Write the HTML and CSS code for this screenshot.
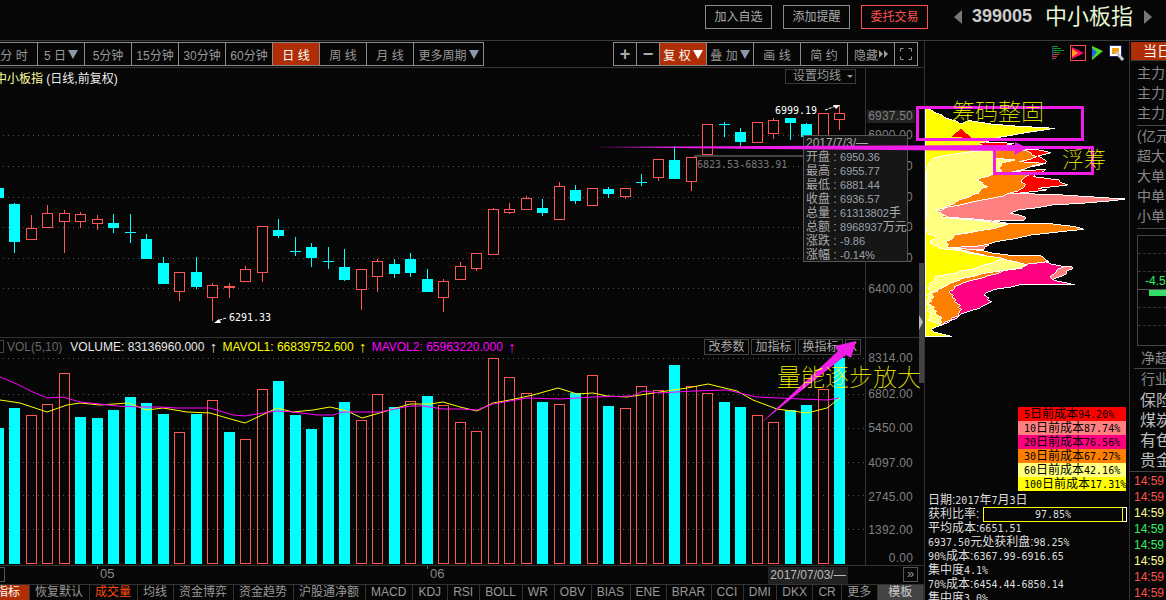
FILE: index.html
```html
<!DOCTYPE html>
<html>
<head>
    <meta charset="UTF-8">
    <title>中小板指</title>
    <link rel="stylesheet" href="styles.css">
</head>
<body>

<!-- top bar -->
<div class="top">
    <span class="top_btn">加入自选</span>
    <span class="top_btn">添加提醒</span>
    <span class="top_btn top_red">委托交易</span>
    <i class="tri_left"></i>
    <span class="code">399005</span>
    <span class="name">中小板指</span>
    <i class="tri_right"></i>
</div>

<div class="main">
    <!-- left: kline -->
    <div class="left">
        <div class="toolbar">
            <div class="tb_group first">
                <span class="cell">分 时</span>
                <span class="cell">5 日<i class="down"></i></span>
                <span class="cell">5分钟</span>
                <span class="cell">15分钟</span>
                <span class="cell">30分钟</span>
                <span class="cell">60分钟</span>
                <span class="cell on">日 线</span>
                <span class="cell">周 线</span>
                <span class="cell">月 线</span>
                <span class="cell wide">更多周期<i class="down"></i></span>
            </div>
            <div class="tb_group">
                <span class="cell small big_text">+</span>
                <span class="cell small big_text">−</span>
                <span class="cell on">复 权<i class="down white"></i></span>
                <span class="cell">叠 加<i class="down"></i></span>
                <span class="cell">画 线</span>
                <span class="cell">简 约</span>
                <span class="cell">隐藏<i class="more"></i><i class="more"></i></span>
                <span class="cell small">
                    <svg width="14" height="14" viewBox="0 0 14 14" fill="none" stroke="#999">
                        <path d="M1.500 4.500V1.500H4.500M9.500 1.500H12.500V4.500M12.500 9.500V12.500H9.500M4.500 12.500H1.500V9.500"/>
                    </svg>
                </span>
            </div>
        </div>

        <div class="chart">
            <svg id="kline" width="924" height="497" viewBox="0 68 924 497"></svg>

            <div class="title"><span class="title_name">中小板指</span> (日线,前复权)</div>
            <div class="set_ma">设置均线<i class="down_small"></i></div>

            <div class="vol_head">
                <span class="vol_box"></span>
                <span class="vol_name">VOL(5,10)</span>
                <span class="vol_w">VOLUME: 83136960.000</span><span class="arrow vol_w">↑</span>
                <span class="vol_y">MAVOL1: 66839752.600</span><span class="arrow vol_y">↑</span>
                <span class="vol_m">MAVOL2: 65963220.000</span><span class="arrow vol_m">↑</span>
            </div>
            <div class="vol_btns">
                <span>改参数</span>
                <span>加指标</span>
                <span>换指标</span>
                <span class="vol_x">X</span>
            </div>

            <div class="tip">
                <div class="tip_date">2017/7/3/—</div>
                <div>开盘 : <b>6950.36</b></div>
                <div>最高 : <b>6955.77</b></div>
                <div>最低 : <b>6881.44</b></div>
                <div>收盘 : <b>6936.57</b></div>
                <div>总量 : <b>61313802</b>手</div>
                <div>总额 : <b>8968937</b>万元</div>
                <div>涨跌 : <b>-9.86</b></div>
                <div>涨幅 : <b>-0.14%</b></div>
            </div>
        </div>

        <div class="timebar">
            <span class="t_box"></span>
            <span class="t_tick t_05">05</span>
            <span class="t_tick t_06">06</span>
            <span class="t_date">2017/07/03/—</span>
            <span class="t_next">»</span>
        </div>

        <div class="tabs">
            <span class="tab tab_on">指标</span>
            <span class="tab">恢复默认</span>
            <span class="tab tab_orange">成交量</span>
            <span class="tab">均线</span>
            <span class="tab">资金博弈</span>
            <span class="tab">资金趋势</span>
            <span class="tab">沪股通净额</span>
            <span class="tab">MACD</span>
            <span class="tab">KDJ</span>
            <span class="tab">RSI</span>
            <span class="tab">BOLL</span>
            <span class="tab">WR</span>
            <span class="tab lat">OBV</span>
            <span class="tab lat">BIAS</span>
            <span class="tab lat">ENE</span>
            <span class="tab lat">BRAR</span>
            <span class="tab lat">CCI</span>
            <span class="tab lat">DMI</span>
            <span class="tab lat">DKX</span>
            <span class="tab lat">CR</span>
            <span class="tab">更多</span>
            <span class="tab tab_tpl">模板</span>
        </div>
    </div>

    <!-- middle: chips -->
    <div class="chip">
        <div class="chip_icons">
            <svg width="12" height="16" viewBox="0 0 12 16" shape-rendering="crispEdges">
                <rect x="0" y="1" width="1" height="14" fill="#2040c0"/>
                <rect x="1" y="1" width="5" height="1" fill="#109020"/>
                <rect x="1" y="3" width="8" height="1" fill="#109020"/>
                <rect x="1" y="5" width="11" height="1" fill="#109020"/>
                <rect x="1" y="7" width="7" height="1" fill="#109020"/>
                <rect x="1" y="9" width="6" height="1" fill="#e04010"/>
                <rect x="1" y="11" width="4" height="1" fill="#e04010"/>
                <rect x="1" y="13" width="3" height="1" fill="#e04010"/>
            </svg>
            <svg width="16" height="16" viewBox="0 0 16 16">
                <rect x="0.500" y="0.500" width="15" height="15" fill="none" stroke="#ff4d4d"/>
                <polygon points="2,2 14,8 2,14" fill="#ff0a6a"/>
                <polygon points="2,4 8,8 2,12" fill="#ffa010"/>
            </svg>
            <svg width="11" height="16" viewBox="0 0 11 16">
                <polygon points="0,1 11,6 0,15" fill="#50e020"/>
                <polygon points="0,3 5,7 0,13" fill="#2060f0"/>
            </svg>
            <svg width="15" height="16" viewBox="0 0 15 16">
                <rect x="0.500" y="0.500" width="12" height="11" fill="#fff" stroke="#1a2a70"/>
                <rect x="3" y="3" width="7" height="6" fill="#f0a010"/>
                <path d="M7 7L14 15" stroke="#ccc" stroke-width="3"/>
            </svg>
        </div>
        <svg id="chips" width="204" height="280" viewBox="925 61 204 280"></svg>

        <div class="legend">
            <div class="c5"><span class="n">5</span>日前成本<span class="n">94.20%</span></div>
            <div class="c10"><span class="n">10</span>日前成本<span class="n">87.74%</span></div>
            <div class="c20"><span class="n">20</span>日前成本<span class="n">76.56%</span></div>
            <div class="c30"><span class="n">30</span>日前成本<span class="n">67.27%</span></div>
            <div class="c60"><span class="n">60</span>日前成本<span class="n">42.16%</span></div>
            <div class="c100"><span class="n">100</span>日前成本<span class="n">17.31%</span></div>
        </div>

        <div class="info">
            <div>日期:<span class="n">2017</span>年<span class="n">7</span>月<span class="n">3</span>日</div>
            <div class="ratio">
                <span class="ratio_label">获利比率:</span>
                <span class="ratio_box"><span class="ratio_bar n">97.85%</span><span class="ratio_rest"></span></span>
            </div>
            <div>平均成本:<span class="n">6651.51</span></div>
            <div><span class="n">6937.50</span>元处获利盘:<span class="n">98.25%</span></div>
            <div><span class="n">90%</span>成本:<span class="n">6367.99-6916.65</span></div>
            <div>集中度<span class="n">4.1%</span></div>
            <div><span class="n">70%</span>成本:<span class="n">6454.44-6850.14</span></div>
            <div>集中度<span class="n">3.0%</span></div>
        </div>
    </div>

    <!-- right: money flow -->
    <div class="side">
        <div class="side_head">当日资金</div>
        <div class="side_group first_group">
            <div class="row">主力流入</div>
            <div class="row">主力流出</div>
            <div class="row">主力净额</div>
        </div>
        <div class="side_group">
            <div class="row">(亿元)</div>
            <div class="row">超大单</div>
            <div class="row">大单</div>
            <div class="row">中单</div>
            <div class="row">小单</div>
        </div>
        <div class="mini">
            <div></div>
            <div></div>
            <div class="mini_mid"><span>-4.5</span></div>
            <div><span class="mini_bar"></span></div>
            <div></div>
            <div></div>
        </div>
        <div class="row net">净超大单</div>
        <div class="row trade">行业</div>
        <div class="row stock">保险</div>
        <div class="row stock">煤炭</div>
        <div class="row stock">有色</div>
        <div class="row stock">贵金属</div>
        <div class="times">
            <div class="up">14:59</div>
            <div class="up">14:59</div>
            <div class="flat">14:59</div>
            <div class="dn">14:59</div>
            <div class="dn">14:59</div>
            <div class="flat">14:59</div>
            <div class="up">14:59</div>
            <div class="up">14:59</div>
        </div>
    </div>
</div>

<!-- hand drawn marks on top of the screenshot -->
<svg class="marks" width="1166" height="600" viewBox="0 0 1166 600">
    <polygon fill="#ee1ee6" points="593,147 760,146 1015,145 1015,142 1028,148 1014,155 1015,151 760,149"/>
    <polygon fill="#ee1ee6" points="761,423 838,351 835,346 856,341 851,358 846,355"/>
    <rect class="mark_box" x="917.500" y="107.500" width="165" height="32"/>
    <rect class="mark_box" x="994.500" y="147.500" width="98" height="26"/>
    <text x="952" y="120" font-size="23">筹码整固</text>
    <text x="1062" y="167" font-size="22">浮筹</text>
    <text x="777" y="386" font-size="24">量能逐步放大</text>
</svg>

<script src="chart.js"></script>
</body>
</html>
```

FILE: styles.css
```css
*{ box-sizing: border-box; }
html,body{ margin: 0; height: 600px; overflow: hidden; }
body{
    position: relative;
    background: #060606;
    color: #999;
    font-family: "Liberation Sans", "Noto Sans CJK SC", sans-serif;
    font-size: 12px;
}
i{ font-style: normal; }

/* top */
.top{
    display: flex;
    align-items: center;
    justify-content: flex-end;
    height: 41px;
    padding: 0 14px 7px 0;
    border-bottom: 1px solid #3a3a3a;
}
.top_btn{
    width: 67px;
    height: 24px;
    margin-right: 11px;
    line-height: 22px;
    text-align: center;
    border: 1px solid #8a8a8a;
    font-size: 12px;
    color: #aaa;
}
.top_red{ margin-right: 26px; color: #ff5050; border-color: #ff5050; }
.tri_left,.tri_right{ width: 0; height: 0; border-top: 7px solid transparent; border-bottom: 7px solid transparent; }
.tri_left{ border-right: 8px solid #777; margin-right: 10px; }
.tri_right{ border-left: 8px solid #777; }
.code{ font-size: 18px; font-weight: bold; color: #ccc; margin-right: 13px; }
.name{ font-size: 22px; line-height: 24px; color: #e2f5d0; margin-right: 11px; }

.main{ display: flex; height: 559px; }

/* left */
.left{ width: 925px; border-right: 1px solid #333; overflow: hidden; }
.toolbar{
    display: flex;
    justify-content: space-between;
    height: 27px;
    padding: 1px 6px 0 0;
    border-bottom: 1px solid #333;
}
.tb_group{ display: flex; height: 24px; border: 1px solid #8a8a8a; border-left: 0; }
.tb_group.first{ margin-left: -10px; }
.cell{
    display: flex;
    align-items: center;
    justify-content: center;
    width: 47px;
    border-left: 1px solid #8a8a8a;
    white-space: pre;
}
.cell.wide{ width: 70px; }
.cell.small{ width: 23px; }
.cell.big_text{ font-size: 18px; font-weight: bold; color: #aaa; }
.cell.on{ background: #b02e05; color: #fff; }
.down{
    width: 0;
    height: 0;
    margin-left: 2px;
    border-left: 5px solid transparent;
    border-right: 5px solid transparent;
    border-top: 9px solid #8a97a8;
}
.down.white{ border-top-color: #fff; }
.more{
    width: 0;
    height: 0;
    margin-left: 1px;
    border-top: 4px solid transparent;
    border-bottom: 4px solid transparent;
    border-left: 4px solid #999;
}

.chart{ position: relative; height: 497px; }
.chart svg{ display: block; }
.chart svg text.axis{ font-size: 12px; fill: #808080; text-anchor: end; letter-spacing: 0.2px; }
.chart svg text.mark{ font-family: "DejaVu Sans Mono", monospace; font-size: 10px; fill: #fff; }
.chart svg text.gray{ fill: #777; }
.title{ position: absolute; left: -5px; top: 1px; color: #eee; white-space: pre; }
.title_name{ color: #ffffa0; }
.set_ma{
    position: absolute;
    left: 785px;
    top: 1px;
    width: 71px;
    height: 15px;
    line-height: 13px;
    padding-left: 7px;
    border: 1px solid #3a3a3a;
    color: #999;
}
.down_small{
    display: inline-block;
    margin-left: 6px;
    vertical-align: 2px;
    border-left: 3px solid transparent;
    border-right: 3px solid transparent;
    border-top: 3px solid #999;
}

.vol_head{
    position: absolute;
    left: 0;
    top: 271px;
    display: flex;
    align-items: center;
    height: 15px;
    white-space: pre;
}
.vol_box{ width: 4px; height: 13px; margin-right: 3px; border: 1px solid #444; border-left: 0; }
.vol_name{ color: #666; margin-right: 8px; }
.vol_w{ color: #e8e8e8; }
.vol_y{ color: #ffff00; }
.vol_m{ color: #ff00ff; }
.arrow{ width: 12px; margin: 0 3px; text-align: center; font-size: 15px; line-height: 15px; }
.vol_btns{ position: absolute; left: 704px; top: 271px; display: flex; gap: 2px; }
.vol_btns span{
    width: 45px;
    height: 16px;
    line-height: 14px;
    text-align: center;
    border: 1px solid #444;
    color: #aaa;
}
.vol_btns .vol_x{ width: 16px; }

.tip{
    position: absolute;
    left: 803px;
    top: 67px;
    width: 105px;
    height: 127px;
    padding-left: 2px;
    background: #161616;
    border: 1px solid #555;
    line-height: 14px;
    color: #aaa;
}
.tip b{ font-weight: normal; font-size: 11px; color: #9aa3ad; }

.timebar{ position: relative; height: 19px; border-top: 1px solid #333; color: #888; font-size: 13px; }
.t_box{ position: absolute; left: -10px; top: 1px; width: 15px; height: 15px; border: 1px solid #555; }
.t_tick{ position: absolute; top: 0; line-height: 16px; }
.t_tick::before{ content: ""; position: absolute; left: -3px; top: 0; width: 1px; height: 3px; background: #666; }
.t_05{ left: 100px; }
.t_06{ left: 430px; }
.t_date{
    position: absolute;
    left: 768px;
    top: 1px;
    width: 80px;
    height: 17px;
    line-height: 17px;
    text-align: center;
    background: #222;
    color: #bbb;
    font-size: 12px;
}
.t_next{
    position: absolute;
    left: 903px;
    top: 1px;
    width: 15px;
    height: 15px;
    line-height: 12px;
    text-align: center;
    border: 1px solid #555;
    color: #999;
}

.tabs{ display: flex; height: 16px; border-top: 1px solid #333; line-height: 15px; white-space: nowrap; }
.tab{ padding: 0 6px 0 5px; border-right: 1px solid #333; color: #999; }
.tab.lat{ padding-right: 5.500px; }
.tab_on{ margin-left: -4px; padding: 0 9px 0 0; background: #b02e05; color: #fff; }
.tab_orange{ color: #ff4a10; }
.tab_tpl{ flex: 1; padding-left: 10px; background: #444; color: #ccc; }

/* chips */
.chip{ width: 204px; overflow: hidden; }
.chip svg{ display: block; }
.chip_icons{ display: flex; justify-content: flex-end; gap: 6px; height: 16px; margin-top: 4px; padding-right: 5px; }
.legend{ width: 108px; margin: 66px 0 0 93px; line-height: 14px; color: #000; }
.legend div{ height: 14px; padding-left: 6px; white-space: nowrap; }
.c5{ background: #ff0000; }
.c10{ background: #ff8080; }
.c20{ background: #ff0080; }
.c30{ background: #ff8000; }
.c60{ background: #ffff80; }
.c100{ background: #ffff00; }
.n{ font-family: "DejaVu Sans Mono", monospace; font-size: 10px; }
.info{ margin-top: 2px; padding-left: 3px; line-height: 14px; color: #ddd; white-space: nowrap; }
.info div{ height: 14px; }
.ratio{ display: flex; }
.ratio_label{ width: 55px; }
.ratio_box{ display: flex; width: 144px; height: 15px; }
.ratio_bar{ flex: 1; line-height: 13px; text-align: center; border: 1px solid #ffff00; }
.ratio_rest{ width: 4px; border: 1px solid #fff; border-left: 0; }

/* side */
.side{ flex: 1; border-left: 1px solid #333; overflow: hidden; font-size: 14px; color: #888; white-space: nowrap; }
.side_head{ height: 18px; margin: 1px 0 0 1px; padding-left: 12px; line-height: 18px; background: #b02e05; color: #fff; }
.row{ height: 20px; line-height: 20px; padding-left: 7px; }
.side_group{ margin-left: 7px; padding-bottom: 2px; border-bottom: 1px solid #444; }
.side_group .row{ padding-left: 0; }
.first_group{ margin: 0; padding: 2px 0 0 7px; border-top: 1px solid #333; border-bottom: 0; }
.first_group::after{ content: ""; display: block; height: 1px; margin-top: 2px; background: #444; }
.mini{ margin: 6px 0 0 7px; height: 111px; border: 1px solid #444; border-right: 0; }
.mini div{ height: 18px; border-bottom: 1px dashed #333; }
.mini div:last-child{ border-bottom: 0; }
.mini .mini_mid{ border-bottom: 1px solid #555; padding-left: 7px; font-size: 12px; line-height: 18px; color: #33ee66; }
.mini_bar{ display: block; width: 30px; height: 6px; margin-left: 11px; background: #33dd66; }
.net{ margin-top: 2px; padding-left: 11px; }
.trade{ border-top: 1px solid #444; margin-left: 4px; height: 23px; line-height: 21px; }
.stock{ padding-left: 10px; font-size: 16px; color: #bbb; }
.times{ padding: 1px 0 0 4px; border-top: 1px solid #444; font-size: 12px; line-height: 16px; }
.up{ color: #ff5050; }
.flat{ color: #ffff90; }
.dn{ color: #33ee66; }

/* marks */
.marks{ position: absolute; left: 0; top: 0; pointer-events: none; }
.marks text{ fill: #ffff00; font-weight: 100; }
.mark_box{ fill: none; stroke: #ee1ee6; stroke-width: 3; }
```

FILE: chart.js
```js
// 日K数据: [颜色, 实体顶, 实体底, 上影, 下影]  都是屏幕y坐标
var candles = [
    ["c",204,242,203,253],["r",228,239,215,239],["r",213,227,205,227],["r",213,221,210,253],
    ["r",214,221,212,228],["r",219,223,215,230],["c",223,228,214,233],["c",232,233,214,243],
    ["c",239,259,234,259],["c",263,284,257,284],["r",272,291,272,301],["c",272,287,257,289],
    ["r",285,297,283,321],["r",286,288,283,298],["r",269,281,266,281],["r",226,272,226,282],
    ["c",230,236,219,238],["c",251,252,237,256],["c",247,258,243,267],["c",261,262,247,269],
    ["c",267,280,249,281],["r",269,289,269,310],["r",261,276,259,292],["c",264,274,259,278],
    ["c",259,273,253,277],["c",279,292,269,292],["r",281,297,279,312],["r",266,279,262,279],
    ["r",253,268,253,271],["r",209,254,208,254],["r",209,212,203,214],["r",198,209,196,209],
    ["c",208,213,199,216],["r",186,219,182,219],["c",190,201,185,204],["r",188,205,188,205],
    ["c",189,194,187,198],["r",188,196,188,199],["c",182,183,174,186],["r",159,177,159,181],
    ["c",160,179,146,179],["r",157,181,157,191],["r",124,154,124,154],["c",124,125,122,137],
    ["c",132,142,128,146],["r",122,142,122,142],["r",120,133,118,139],["c",118,123,118,140],
    ["c",124,137,123,137],["r",113,137,113,137],["r",113,119,105,130]
];
// 成交量: [颜色, 柱顶]
var vols = [
    ["c",408],["r",415],["r",404],["r",373],["c",417],["c",418],["c",410],["c",397],
    ["c",403],["c",414],["r",432],["c",414],["r",400],["c",432],["r",439],["r",389],
    ["c",381],["c",415],["c",429],["c",417],["c",402],["r",420],["r",394],["c",407],
    ["r",401],["c",396],["r",405],["r",422],["r",431],["r",358],["r",377],["r",393],
    ["c",402],["r",404],["c",393],["r",375],["c",406],["r",408],["r",386],["r",390],
    ["c",365],["r",386],["r",393],["c",402],["c",407],["r",415],["r",422],["c",410],
    ["c",405],["r",389],["c",358]
];
var RED = "#ff5555", CYAN = "#00ffff", VOL_BOTTOM = 564;

var yellowLine = "0,400 20,403 47,412 67,405 80,403 100,405 128,403 147,410 163,408 187,412 210,413 227,418 245,423 277,408 293,412 313,410 330,407 347,411 362,418 383,412 410,404 430,404 443,402 460,407 477,411 493,403 510,400 533,395 558,388 577,394 593,393 607,396 627,397 660,392 687,388 708,384 737,391 753,400 777,409 807,413 827,408 840,398";
var magentaLine = "0,377 17,384 33,392 47,398 63,397 80,402 100,404 117,406 140,407 160,407 177,408 210,408 233,415 245,416 263,413 277,411 293,412 317,415 333,415 343,412 380,412 410,406 423,406 443,409 460,409 477,410 493,404 527,398 560,399 593,397 633,396 643,391 660,393 693,391 727,390 757,397 800,399 827,400 839,398";

var s = "";
function rect(x, y, w, h, fill) {
    return '<rect x="' + x + '" y="' + y + '" width="' + w + '" height="' + h + '" fill="' + fill + '"/>';
}
function box(x, y, w, h, stroke) {
    return '<rect x="' + (x + 0.5) + '" y="' + (y + 0.5) + '" width="' + w + '" height="' + h + '" fill="#060606" stroke="' + stroke + '"/>';
}
function dotted(y) {
    return '<line x1="3" x2="865" y1="' + y + '.5" y2="' + y + '.5" stroke="#555" stroke-dasharray="1 4"/>';
}
function label(x, y, text, cls) {
    return '<text class="' + cls + '" x="' + x + '" y="' + y + '">' + text + '</text>';
}
function left(i) {
    return Math.round(9 + 16.5 * i);
}

// 网格
[135, 166, 197, 227, 258, 288, 358, 394, 428, 462, 495, 529].forEach(function (y) { s += dotted(y); });

s += '<g shape-rendering="crispEdges">';
s += rect(865, 68, 1, 497, "#333") + rect(0, 337, 919, 1, "#333");
s += rect(919, 263, 5, 120, "#444");

// 左边被切掉的一根
s += rect(0, 188, 4, 10, CYAN) + rect(0, 428, 4, VOL_BOTTOM - 428, CYAN);

candles.forEach(function (c, i) {
    var x = left(i), col = c[0] == "r" ? RED : CYAN;
    s += rect(x + 5, c[3], 1, c[4] - c[3], col);
    if (c[0] == "r" && c[2] - c[1] >= 3) {
        s += box(x, c[1], 10, c[2] - c[1], col);
    } else {
        s += rect(x, c[1], 11, c[2] - c[1], col);
    }
});
vols.forEach(function (v, i) {
    var x = left(i);
    if (v[0] == "r") {
        s += '<rect x="' + (x + 0.5) + '" y="' + (v[1] + 0.5) + '" width="10" height="' + (VOL_BOTTOM - v[1] - 1) + '" fill="none" stroke="' + RED + '"/>';
    } else {
        s += rect(x, v[1], 11, VOL_BOTTOM - v[1], CYAN);
    }
});
s += '</g>';

s += '<polyline points="' + yellowLine + '" fill="none" stroke="#ffff00"/>';
s += '<polyline points="' + magentaLine + '" fill="none" stroke="#ff00ff"/>';

// 价格标注
s += rect(867, 110, 48, 13, "#222");
s += rect(694, 155, 109, 2, "#444");
s += label(775, 114, "6999.19", "mark");
s += label(229, 321, "6291.33", "mark");
s += label(697, 168, "6823.53-6833.91", "mark gray");
s += '<path d="M825 110L836 106" stroke="#fff" stroke-dasharray="3 1"/><polygon points="840,105 833,105 836,109" fill="#fff"/>';
s += '<path d="M226 318L217 321" stroke="#fff" stroke-dasharray="3 1"/><polygon points="214,323 221,323 219,319" fill="#fff"/>';

[["6937.50", 120], ["6900.00", 139], ["6800.00", 170], ["6700.00", 201], ["6600.00", 231], ["6500.00", 262], ["6400.00", 293],
 ["8314.00", 362], ["6802.00", 398], ["5450.00", 432], ["4097.00", 467], ["2745.00", 501], ["1392.00", 534], ["0.00", 562]].forEach(function (p) {
    s += label(913, p[1], p[0], "axis");
});
s += '<polygon points="919,315 923,322 919,330" fill="#bbb"/>';
document.getElementById("kline").innerHTML = s;

// 筹码峰: 坐标按 3 倍图量的
var chipLayers = [
    ["#ff0000", "437,20 520,10 540,0 552,22 600,35 700,40 640,60 780,60 810,68 780,78 800,100 690,125 800,118 760,140 830,150 860,165 780,175 800,180 705,190 437,190"],
    ["#ff8080", "437,190 700,190 850,195 1000,205 1040,207 1000,212 820,225 720,240 690,250 740,262 730,270 437,280"],
    ["#ff8080", "437,340 620,345 610,358 437,358"],
    ["#ff8080", "437,400 810,410 880,410 860,430 810,452 437,452"],
    ["#ff0080", "437,395 790,395 850,410 820,430 810,445 880,465 720,465 650,478 610,490 635,515 610,525 600,535 560,545 490,585 437,590"],
    ["#ff8000", "437,55 650,62 740,62 770,80 720,95 790,100 700,125 760,130 720,150 740,170 690,190 640,205 580,215 500,232 475,245 500,262 600,268 700,282 800,280 880,290 915,298 840,305 760,315 650,335 590,350 510,352 600,362 680,375 790,378 800,395 720,405 650,430 600,445 530,465 510,490 530,515 545,545 510,570 490,582 437,600"],
    ["#ffff80", "437,60 640,60 650,85 700,90 665,100 660,125 590,150 620,170 580,195 530,215 475,240 490,262 600,272 690,283 640,295 530,315 500,335 505,350 520,355 610,375 700,395 745,405 720,415 610,430 550,445 490,470 460,490 450,520 470,550 485,570 480,585 437,600"],
    ["#ffff00", "437,-65 543,-18 565,-28 640,-18 705,-12 819,-5 760,5 695,15 635,28 600,40 620,60 570,65 470,80 445,100 440,130 438,300 445,312 470,318 450,340 480,355 540,362 600,375 665,385 640,398 600,410 520,430 470,440 450,460 445,500 442,520 448,540 450,570 480,585 450,600 510,620 437,620"],
    ["#ff0000", "543,-5 516,20 575,25"]
];

// 把折线拆成一格一格的台阶, 边缘才像原图那样毛糙
function jag(points) {
    var p = points.split(" ").map(function (q) { return q.split(",").map(Number); });
    var out = [], n = 0;
    for (var i = 0; i < p.length - 1; i++) {
        var a = p[i], b = p[i + 1], steps = Math.max(1, Math.floor(Math.abs(b[1] - a[1]) / 6));
        for (var j = 0; j < steps; j++) {
            var x = a[0] + (b[0] - a[0]) * j / steps;
            var y = a[1] + (b[1] - a[1]) * j / steps;
            n++;
            if (x > 445) x += (n * 7) % 5 * 3 - 6;
            out.push(Math.round(x) + "," + Math.round(y));
        }
    }
    out.push(p[p.length - 1].join(","));
    return out.join(" ");
}

var c = '<g transform="translate(780 130) scale(0.3333)" shape-rendering="crispEdges">';
chipLayers.forEach(function (l, i) {
    var pts = i == 8 ? l[1] : jag(l[1]);
    c += '<polygon points="' + pts + '" fill="' + l[0] + '" stroke="#fff" stroke-width="' + (i == 8 ? 0 : 3) + '"/>';
});
c += '</g>';
document.getElementById("chips").innerHTML = c;
```
